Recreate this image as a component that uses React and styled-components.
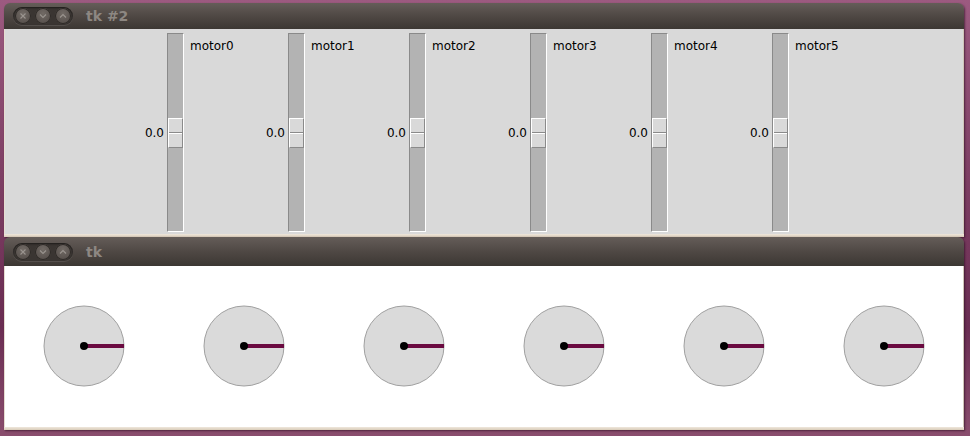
import React from "react";
import styled, { createGlobalStyle } from "styled-components";

const GlobalStyle = createGlobalStyle`
  html, body {
    margin: 0;
    padding: 0;
    width: 970px;
    height: 436px;
    overflow: hidden;
    background: linear-gradient(180deg, #9c5a80 0%, #7e3f64 40%, #6a2d52 75%, #8a4e6e 100%);
    font-family: "DejaVu Sans", "Liberation Sans", sans-serif;
  }
`;

const Desktop = styled.div`
  display: flex;
  flex-direction: column;
  padding: 3px 0 0 4px;
`;

const Window = styled.div`
  width: 960px;
  display: flex;
  flex-direction: column;
  border-radius: 6px 6px 0 0;
  box-shadow: 1px 1px 2px rgba(40, 10, 30, 0.6);
`;

const TitleBar = styled.div`
  height: ${(p) => p.$h}px;
  display: flex;
  align-items: center;
  gap: 13px;
  padding-left: 9px;
  border-radius: 6px 6px 0 0;
  background: linear-gradient(180deg, #655d59 0%, #4f4844 50%, #3c3733 100%);
`;

const ButtonGroup = styled.div`
  display: flex;
  gap: 4px;
  padding: 1px 2px;
  border-radius: 10px;
  background: #3a3532;
  box-shadow: inset 0 1px 2px rgba(0, 0, 0, 0.5), 0 1px 0 rgba(255, 255, 255, 0.1);
`;

const TitleButton = styled.div`
  width: 16px;
  height: 16px;
  border-radius: 50%;
  display: flex;
  align-items: center;
  justify-content: center;
  background: radial-gradient(circle at 50% 35%, #716a65 0%, #59524e 70%, #4a4441 100%);
  box-shadow: inset 0 0 0 1px #2e2a27;
`;

const Title = styled.div`
  color: #8d8782;
  font-family: "DejaVu Sans", sans-serif;
  font-weight: bold;
  font-size: 14px;
`;

const Body = styled.div`
  background: ${(p) => p.$bg};
  border-left: 1px solid #e6ddd0;
  border-right: 1px solid #cfc5b8;
  height: ${(p) => p.$h}px;
  display: flex;
`;

const BottomEdge = styled.div`
  height: 3px;
  background: linear-gradient(180deg, #efe7dc, #d8cbb8);
`;

const Sliders = styled.div`
  display: flex;
  padding: 4px 0 0 122px;
`;

const ScaleColumn = styled.div`
  width: 121px;
  display: flex;
  align-items: flex-start;
`;

const ValueArea = styled.div`
  width: 40px;
  height: 199px;
  display: flex;
  align-items: center;
  justify-content: flex-end;
  padding-right: 3px;
  box-sizing: border-box;
  font-size: 12px;
  color: #000;
`;

const Trough = styled.div`
  width: 17px;
  height: 199px;
  box-sizing: border-box;
  background: #b3b3b3;
  border-top: 1px solid #8a8a8a;
  border-left: 1px solid #8a8a8a;
  border-right: 1px solid #ffffff;
  border-bottom: 1px solid #ffffff;
  display: flex;
  align-items: center;
`;

const Handle = styled.div`
  width: 15px;
  height: 30px;
  box-sizing: border-box;
  display: flex;
  flex-direction: column;
  border-top: 1px solid #ffffff;
  border-left: 1px solid #ffffff;
  border-right: 1px solid #8a8a8a;
  border-bottom: 1px solid #8a8a8a;
  background: #d9d9d9;
`;

const HandleHalf = styled.div`
  flex: 1;
  border-bottom: ${(p) => (p.$top ? "1px solid #8a8a8a" : "none")};
  border-top: ${(p) => (p.$top ? "none" : "1px solid #ffffff")};
`;

const NameLabel = styled.div`
  padding: 6px 0 0 6px;
  font-size: 12px;
  color: #000;
`;

const Dials = styled.div`
  display: flex;
  align-items: flex-start;
  padding-top: 39px;
`;

const DialCell = styled.div`
  width: 160px;
  box-sizing: border-box;
  display: flex;
  padding-left: 38px;
`;

const Chevron = ({ kind }) => (
  <svg width="8" height="8" viewBox="0 0 8 8">
    {kind === "x" && (
      <path d="M1.5 1.5 L6.5 6.5 M6.5 1.5 L1.5 6.5" stroke="#9a948f" strokeWidth="1.1" fill="none" />
    )}
    {kind === "down" && (
      <path d="M1 2.5 L4 5.5 L7 2.5" stroke="#9a948f" strokeWidth="1.1" fill="none" />
    )}
    {kind === "up" && (
      <path d="M1 5.5 L4 2.5 L7 5.5" stroke="#9a948f" strokeWidth="1.1" fill="none" />
    )}
  </svg>
);

const Dial = () => (
  <svg width="82" height="82" viewBox="0 0 82 82">
    <circle cx="41" cy="41" r="40" fill="#dadada" stroke="#a0a0a0" strokeWidth="1" />
    <line x1="41" y1="41" x2="81" y2="41" stroke="#6a0a40" strokeWidth="4" />
    <circle cx="41" cy="41" r="4" fill="#000" />
  </svg>
);

function TitleBarRow({ title, h }) {
  return (
    <TitleBar $h={h}>
      <ButtonGroup>
        <TitleButton><Chevron kind="x" /></TitleButton>
        <TitleButton><Chevron kind="down" /></TitleButton>
        <TitleButton><Chevron kind="up" /></TitleButton>
      </ButtonGroup>
      <Title>{title}</Title>
    </TitleBar>
  );
}

const motors = ["motor0", "motor1", "motor2", "motor3", "motor4", "motor5"];

export default function App() {
  return (
    <>
      <GlobalStyle />
      <Desktop>
        <Window>
          <TitleBarRow title="tk #2" h={26} />
          <Body $bg="#d9d9d9" $h={205}>
            <Sliders>
              {motors.map((m) => (
                <ScaleColumn key={m}>
                  <ValueArea>0.0</ValueArea>
                  <Trough>
                    <Handle>
                      <HandleHalf $top />
                      <HandleHalf />
                    </Handle>
                  </Trough>
                  <NameLabel>{m}</NameLabel>
                </ScaleColumn>
              ))}
            </Sliders>
          </Body>
          <BottomEdge />
        </Window>
        <Window>
          <TitleBarRow title="tk" h={29} />
          <Body $bg="#ffffff" $h={161}>
            <Dials>
              {motors.map((m) => (
                <DialCell key={m}>
                  <Dial />
                </DialCell>
              ))}
            </Dials>
          </Body>
          <BottomEdge />
        </Window>
      </Desktop>
    </>
  );
}
